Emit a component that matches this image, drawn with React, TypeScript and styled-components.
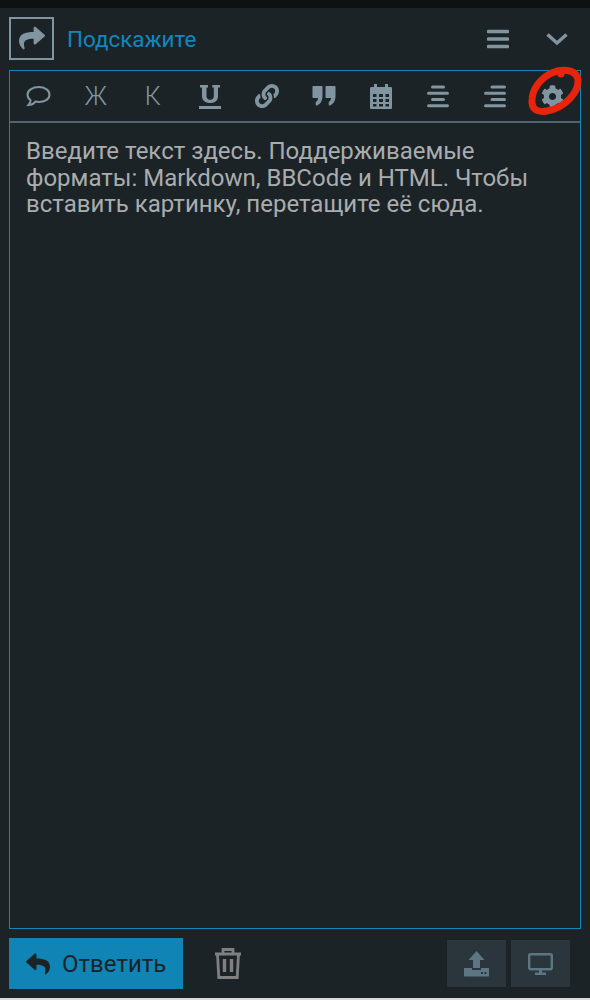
import React from "react";
import styled, { createGlobalStyle } from "styled-components";
import { FaCog, FaLink, FaReply, FaShare } from "react-icons/fa";

const Global = createGlobalStyle`
  html, body { margin: 0; padding: 0; background: #1c2327; }
  #root { width: 590px; height: 1000px; }
  * { box-sizing: border-box; }
`;

const G = "#80959f";

const Page = styled.div`
  position: relative;
  width: 590px;
  height: 1000px;
  display: flex;
  flex-direction: column;
  background: #1c2327;
  font-family: Roboto, "Noto Sans", sans-serif;
  overflow: hidden;
`;
const TopStrip = styled.div`
  height: 8px;
  background: #0f1010;
  flex: none;
`;
const Header = styled.header`
  height: 62px;
  flex: none;
  display: flex;
  align-items: center;
  padding: 0 22px 1px 9px;
`;
const ReplyBox = styled.div`
  width: 45px;
  height: 43px;
  margin-top: -1px;
  border: 2px solid ${G};
  display: flex;
  align-items: center;
  justify-content: center;
  flex: none;
  color: ${G};
`;
const Title = styled.div`
  margin-left: 13px;
  color: #1187bd;
  font-size: 22.4px;
  flex: 1;
`;
const HeaderIcons = styled.div`
  display: flex;
  align-items: center;
  gap: 37px;
`;
const Editor = styled.section`
  margin: 0 9px;
  height: 859px;
  flex: none;
  border: 1px solid #0f87bb;
  display: flex;
  flex-direction: column;
`;
const Toolbar = styled.div`
  height: 52px;
  flex: none;
  border-bottom: 2px solid #4d6672;
  display: grid;
  grid-template-columns: repeat(10, 57.1px);
  align-items: center;
  justify-items: center;
  color: ${G};
`;
const ToolLetter = styled.span`
  color: ${G};
  font-size: 25px;
  font-weight: 300;
  line-height: 1;
`;
const Body = styled.div`
  padding: 15px 16px;
  color: #a9adaf;
  font-size: 24px;
  line-height: 26.7px;
`;
const Footer = styled.footer`
  flex: 1;
  display: flex;
  align-items: center;
  padding: 9px 20px 9px 9px;
`;
const SendButton = styled.button`
  width: 174px;
  height: 51px;
  background: #0f84b5;
  border: 0;
  padding: 0 0 0 17px;
  display: flex;
  align-items: center;
  gap: 12px;
  color: #1c2327;
  font: 400 24px Roboto, sans-serif;
`;
const Trash = styled.div`
  margin-left: 31px;
  display: flex;
  flex: 1;
`;
const SquareButton = styled.div`
  width: 59px;
  height: 47px;
  background: #2a353c;
  display: flex;
  align-items: center;
  justify-content: center;
  margin-left: 5px;
`;
const BottomStrip = styled.div`
  height: 2px;
  background: #d9d9d9;
  flex: none;
`;
const Mark = styled.svg`
  position: absolute;
  left: 525px;
  top: 64px;
`;

const Bars = () => (
  <svg width="22" height="20" viewBox="0 0 22 20">
    <path d="M1.500 2.500h19M1.500 10h19M1.500 17.500h19" stroke={G} strokeWidth="3.600" strokeLinecap="round" />
  </svg>
);
const Chevron = () => (
  <svg width="22" height="14" viewBox="0 0 22 14">
    <path d="M1.500 2.500l9.500 8.500 9.500-8.500" stroke={G} strokeWidth="3.400" fill="none" />
  </svg>
);
const Bubble = () => (
  <svg width="25" height="22" viewBox="0 0 25 22">
    <path d="M12.800 2C18.500 2 23.500 5 23.500 9.700S18.500 17 12.800 17c-1.300 0-2.500-.2-3.500-.4C8 18.600 5.500 19.800 2.500 20c1.200-1.300 2-2.800 2.100-4.800C2.700 13.800 1.500 12 1.500 9.700 1.500 5 7 2 12.800 2z" fill="none" stroke={G} strokeWidth="2" />
  </svg>
);
const Underline = () => (
  <svg width="22" height="25" viewBox="0 0 22 25">
    <path d="M1 1h8v2.500H7.500V12c0 2.400 1.300 3.700 3.700 3.700s3.600-1.300 3.600-3.700V3.500h-1.500V1H21v2.500h-2V12c0 4.700-3 7-7.800 7S3 16.700 3 12V3.500H1z" fill={G} />
    <rect y="22" width="22" height="3" fill={G} />
  </svg>
);
const Quote = () => (
  <svg width="24" height="22" viewBox="0 0 24 22">
    <path d="M1.500 1h8c.7 0 1 .3 1 1v9c0 4.500-2 8-5.500 9.500-.8.300-1.300-.2-1.300-1V17c1.500-.8 2.300-2 2.300-4H1.500c-.7 0-1-.3-1-1V2c0-.7.300-1 1-1zM14.500 1h8c.7 0 1 .3 1 1v9c0 4.500-2 8-5.500 9.500-.8.300-1.300-.2-1.300-1V17c1.500-.8 2.300-2 2.300-4h-4.500c-.7 0-1-.3-1-1V2c0-.7.300-1 1-1z" fill={G} />
  </svg>
);
const Calendar = () => (
  <svg width="22" height="25" viewBox="0 0 22 25">
    <path fillRule="evenodd" d="M4 0h3v3h8V0h3v3h2.500c1 0 1.500.5 1.500 1.500v19c0 1-.5 1.500-1.500 1.500h-19C.5 25 0 24.500 0 23.500v-19C0 3.500.5 3 1.500 3H4zM3 10v3h3.500v-3zm6 0v3h4v-3zm6.500 0v3H19v-3zM3 15v3h3.500v-3zm6 0v3h4v-3zm6.500 0v3H19v-3zM3 20v2.500h3.500V20zm6 0v2.500h4V20zm6.500 0v2.500H19V20z" fill={G} />
  </svg>
);
const AlignCenter = () => (
  <svg width="22" height="24" viewBox="0 0 22 24">
    <path d="M5.500 3h11M1.500 9.300h19M5.500 15.500h11M1.500 21.800h19" stroke={G} strokeWidth="3" strokeLinecap="round" />
  </svg>
);
const AlignRight = () => (
  <svg width="22" height="24" viewBox="0 0 22 24">
    <path d="M8 3h12.500M1.500 9.300h19M8 15.500h12.500M1.500 21.800h19" stroke={G} strokeWidth="3" strokeLinecap="round" />
  </svg>
);
const TrashIcon = () => (
  <svg width="28" height="33" viewBox="0 0 28 33">
    <g fill="none" stroke="#808080" strokeWidth="2.800">
      <path d="M1 7h26M9 6V2.500h10V6M3.500 7l1.300 23.500h18.400L24.500 7" />
      <path d="M10.500 12v13M17.500 12v13" strokeWidth="3.400" />
    </g>
  </svg>
);
const UploadIcon = () => (
  <svg width="25" height="26" viewBox="0 0 25 26">
    <path d="M12.500 0l8 9h-4.500v8h-7V9H4.500zM0 17h8v2h9v-2h8v7.500c0 .7-.4 1-1 1H1c-.6 0-1-.3-1-1z" fill="#5d7683" />
    <rect x="17" y="21" width="2" height="2" fill="#2a353c" />
    <rect x="20.500" y="21" width="2" height="2" fill="#2a353c" />
  </svg>
);
const MonitorIcon = () => (
  <svg width="25" height="22" viewBox="0 0 25 22">
    <rect x="1.200" y="1.200" width="22.600" height="15" rx="1.500" fill="none" stroke="#5d7683" strokeWidth="2.400" />
    <path d="M11 17h3v2.500h4V22H7v-2.500h4z" fill="#5d7683" />
  </svg>
);

export default function App() {
  return (
    <Page>
      <Global />
      <TopStrip />
      <Header>
        <ReplyBox><FaShare size={26} /></ReplyBox>
        <Title>Подскажите</Title>
        <HeaderIcons><Bars /><Chevron /></HeaderIcons>
      </Header>
      <Editor>
        <Toolbar>
          <Bubble />
          <ToolLetter>Ж</ToolLetter>
          <ToolLetter>К</ToolLetter>
          <Underline />
          <FaLink size={24} />
          <Quote />
          <Calendar />
          <AlignCenter />
          <AlignRight />
          <FaCog size={23} />
        </Toolbar>
        <Body>
          Введите текст здесь. Поддерживаемые<br />
          форматы: Markdown, BBCode и HTML. Чтобы<br />
          вставить картинку, перетащите её сюда.
        </Body>
      </Editor>
      <Footer>
        <SendButton><FaReply size={24} />Ответить</SendButton>
        <Trash><TrashIcon /></Trash>
        <SquareButton><UploadIcon /></SquareButton>
        <SquareButton><MonitorIcon /></SquareButton>
      </Footer>
      <BottomStrip />
      <Mark width="60" height="56" viewBox="0 0 60 56">
        <path d="M32 7C42 5 52 7 53 16 54 28 40 44 22 47 12 49 6 45 7 35 8 22 20 9 34 7c1 0 2 1 2 3" fill="none" stroke="#e8240c" strokeWidth="7" strokeLinecap="round" />
      </Mark>
    </Page>
  );
}
